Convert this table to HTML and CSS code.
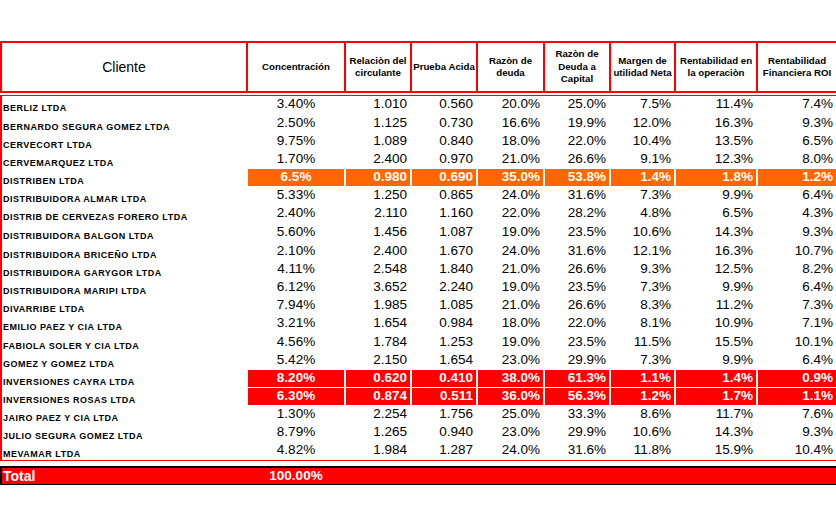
FILE: index.html
```html
<html>
<head>
<meta charset="utf-8">
<link rel="stylesheet" href="styles.css">
</head>
<body>
	<div class="sheet">
		<div class="head">
			<div class="client">Cliente</div>
			<div>Concentración</div>
			<div>Relaciòn del<br>circulante</div>
			<div>Prueba Acida</div>
			<div>Razòn de<br>deuda</div>
			<div>Razòn de<br>Deuda a<br>Capital</div>
			<div>Margen de<br>utilidad Neta</div>
			<div>Rentabilidad en<br>la operaciòn</div>
			<div>Rentabilidad<br>Financiera ROI</div>
		</div>

		<div class="rows">
			<div class="row"><div class="name">BERLIZ LTDA</div><div class="conc">3.40%</div><div>1.010</div><div>0.560</div><div>20.0%</div><div>25.0%</div><div>7.5%</div><div>11.4%</div><div>7.4%</div></div>
			<div class="row tall"><div class="name">BERNARDO SEGURA GOMEZ LTDA</div><div class="conc">2.50%</div><div>1.125</div><div>0.730</div><div>16.6%</div><div>19.9%</div><div>12.0%</div><div>16.3%</div><div>9.3%</div></div>
			<div class="row"><div class="name">CERVECORT LTDA</div><div class="conc">9.75%</div><div>1.089</div><div>0.840</div><div>18.0%</div><div>22.0%</div><div>10.4%</div><div>13.5%</div><div>6.5%</div></div>
			<div class="row"><div class="name">CERVEMARQUEZ LTDA</div><div class="conc">1.70%</div><div>2.400</div><div>0.970</div><div>21.0%</div><div>26.6%</div><div>9.1%</div><div>12.3%</div><div>8.0%</div></div>
			<div class="row warn"><div class="name">DISTRIBEN LTDA</div><div class="conc">6.5%</div><div>0.980</div><div>0.690</div><div>35.0%</div><div>53.8%</div><div>1.4%</div><div>1.8%</div><div>1.2%</div></div>
			<div class="row"><div class="name">DISTRIBUIDORA ALMAR LTDA</div><div class="conc">5.33%</div><div>1.250</div><div>0.865</div><div>24.0%</div><div>31.6%</div><div>7.3%</div><div>9.9%</div><div>6.4%</div></div>
			<div class="row"><div class="name">DISTRIB DE CERVEZAS FORERO LTDA</div><div class="conc">2.40%</div><div>2.110</div><div>1.160</div><div>22.0%</div><div>28.2%</div><div>4.8%</div><div>6.5%</div><div>4.3%</div></div>
			<div class="row tall"><div class="name">DISTRIBUIDORA BALGON LTDA</div><div class="conc">5.60%</div><div>1.456</div><div>1.087</div><div>19.0%</div><div>23.5%</div><div>10.6%</div><div>14.3%</div><div>9.3%</div></div>
			<div class="row tall"><div class="name">DISTRIBUIDORA BRICEÑO LTDA</div><div class="conc">2.10%</div><div>2.400</div><div>1.670</div><div>24.0%</div><div>31.6%</div><div>12.1%</div><div>16.3%</div><div>10.7%</div></div>
			<div class="row"><div class="name">DISTRIBUIDORA GARYGOR LTDA</div><div class="conc">4.11%</div><div>2.548</div><div>1.840</div><div>21.0%</div><div>26.6%</div><div>9.3%</div><div>12.5%</div><div>8.2%</div></div>
			<div class="row"><div class="name">DISTRIBUIDORA MARIPI LTDA</div><div class="conc">6.12%</div><div>3.652</div><div>2.240</div><div>19.0%</div><div>23.5%</div><div>7.3%</div><div>9.9%</div><div>6.4%</div></div>
			<div class="row"><div class="name">DIVARRIBE LTDA</div><div class="conc">7.94%</div><div>1.985</div><div>1.085</div><div>21.0%</div><div>26.6%</div><div>8.3%</div><div>11.2%</div><div>7.3%</div></div>
			<div class="row"><div class="name">EMILIO PAEZ Y CIA LTDA</div><div class="conc">3.21%</div><div>1.654</div><div>0.984</div><div>18.0%</div><div>22.0%</div><div>8.1%</div><div>10.9%</div><div>7.1%</div></div>
			<div class="row tall"><div class="name">FABIOLA SOLER Y CIA LTDA</div><div class="conc">4.56%</div><div>1.784</div><div>1.253</div><div>19.0%</div><div>23.5%</div><div>11.5%</div><div>15.5%</div><div>10.1%</div></div>
			<div class="row"><div class="name">GOMEZ Y GOMEZ LTDA</div><div class="conc">5.42%</div><div>2.150</div><div>1.654</div><div>23.0%</div><div>29.9%</div><div>7.3%</div><div>9.9%</div><div>6.4%</div></div>
			<div class="row alert"><div class="name">INVERSIONES CAYRA LTDA</div><div class="conc">8.20%</div><div>0.620</div><div>0.410</div><div>38.0%</div><div>61.3%</div><div>1.1%</div><div>1.4%</div><div>0.9%</div></div>
			<div class="row alert"><div class="name">INVERSIONES ROSAS LTDA</div><div class="conc">6.30%</div><div>0.874</div><div>0.511</div><div>36.0%</div><div>56.3%</div><div>1.2%</div><div>1.7%</div><div>1.1%</div></div>
			<div class="row"><div class="name">JAIRO PAEZ Y CIA LTDA</div><div class="conc">1.30%</div><div>2.254</div><div>1.756</div><div>25.0%</div><div>33.3%</div><div>8.6%</div><div>11.7%</div><div>7.6%</div></div>
			<div class="row"><div class="name">JULIO SEGURA GOMEZ LTDA</div><div class="conc">8.79%</div><div>1.265</div><div>0.940</div><div>23.0%</div><div>29.9%</div><div>10.6%</div><div>14.3%</div><div>9.3%</div></div>
			<div class="row"><div class="name">MEVAMAR LTDA</div><div class="conc">4.82%</div><div>1.984</div><div>1.287</div><div>24.0%</div><div>31.6%</div><div>11.8%</div><div>15.9%</div><div>10.4%</div></div>
		</div>

		<div class="total">
			<div class="label">Total</div>
			<div class="conc">100.00%</div>
		</div>
	</div>
</body>
</html>
```

FILE: styles.css
```css
* {
	box-sizing: border-box;
}
body {
	margin: 0;
	background: #fff;
	color: #000;
	font-family: "Liberation Sans", Arial, sans-serif;
}
.sheet {
	padding-top: 41px;
}
.head,
.row,
.total {
	display: grid;
	grid-template-columns: 246px 98px 66px 66px 67px 66px 65px 82px 1fr;
}

/* header */
.head {
	height: 52px;
	border-top: 2px solid #f00;
	border-bottom: 2px solid #f00;
	border-left: 2px solid #f00;
}
.head div {
	display: flex;
	align-items: center;
	justify-content: center;
	text-align: center;
	border-right: 2px solid #f00;
	font-size: 9.7px;
	font-weight: 700;
	line-height: 12.5px;
	white-space: nowrap;
}
.head div:last-child {
	border-right: 0;
}
.head .client {
	font-size: 14px;
	font-weight: 400;
	padding-top: 1px;
}

/* rows */
.rows {
	margin-top: 2px;
	border-top: 1px solid #f00;
	border-bottom: 1px solid #f00;
	border-left: 2px solid #f00;
}
.row {
	height: 18px;
}
.row.tall {
	height: 19px;
}
.row div {
	display: flex;
	align-items: flex-end;
	justify-content: flex-end;
	border-right: 2px solid transparent;
	border-bottom: 1px solid transparent;
	background-clip: padding-box;
	padding: 0 3px 2px 0;
	font-size: 13.5px;
	line-height: 14px;
	white-space: nowrap;
}
.row div:last-child {
	border-right: 0;
}
.row .name {
	justify-content: flex-start;
	padding: 0 0 0 1px;
	font-size: 9px;
	font-weight: 700;
	letter-spacing: 0.5px;
	line-height: 10px;
}
.row .conc {
	justify-content: center;
	padding-right: 0;
}
.row.warn div:not(.name) {
	background-color: #ff6600;
	color: #fff;
	font-weight: 700;
}
.row.alert div:not(.name) {
	background-color: #f00;
	color: #fff;
	font-weight: 700;
}

/* total */
.total {
	height: 19px;
	margin-top: 5px;
	border-top: 2px solid #000;
	border-bottom: 1px solid #000;
	border-left: 2px solid #000;
	background: #f00;
	color: #fff;
	font-weight: 700;
}
.total div {
	display: flex;
	align-items: flex-end;
	padding-bottom: 1px;
	line-height: 14px;
	border-right: 2px solid transparent;
}
.total .label {
	padding-left: 1px;
	font-size: 14px;
}
.total .conc {
	justify-content: center;
	font-size: 13.5px;
}
```
